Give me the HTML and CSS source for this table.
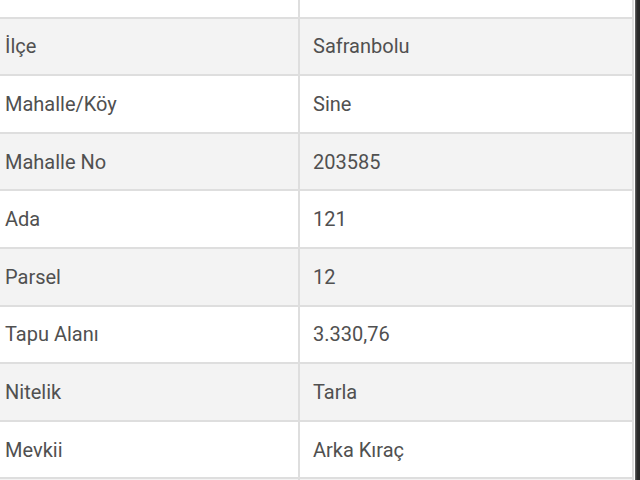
FILE: index.html
```html
<!DOCTYPE html>
<html lang="tr">
<head>
<meta charset="utf-8">
<link rel="stylesheet" href="styles.css">
</head>
<body>
<div class="page">
  <main class="sheet">
    <table class="info">
      <tbody>
        <tr class="odd"><td>İl</td><td>Karabük</td></tr>
        <tr class="even"><td>İlçe</td><td>Safranbolu</td></tr>
        <tr class="odd"><td>Mahalle/Köy</td><td>Sine</td></tr>
        <tr class="even"><td>Mahalle No</td><td>203585</td></tr>
        <tr class="odd"><td>Ada</td><td>121</td></tr>
        <tr class="even"><td>Parsel</td><td>12</td></tr>
        <tr class="odd"><td>Tapu Alanı</td><td>3.330,76</td></tr>
        <tr class="even"><td>Nitelik</td><td>Tarla</td></tr>
        <tr class="odd"><td>Mevkii</td><td>Arka Kıraç</td></tr>
        <tr class="even"><td>Zemin Tipi</td><td>Ana Taşınmaz</td></tr>
      </tbody>
    </table>
  </main>
  <div class="edge"></div>
</div>
</body>
</html>
```

FILE: styles.css
```css
html, body {
  margin: 0;
  padding: 0;
  width: 640px;
  height: 480px;
  overflow: hidden;
  background: #fff;
}

.page {
  display: flex;
  width: 640px;
  height: 480px;
  overflow: hidden;
}

.sheet {
  width: 635px;
  flex: none;
  overflow: hidden;
  background: #fff;
}

.edge {
  flex: 1;
  background: linear-gradient(to right, #6a6a6a, #2c2c2c 40%, #262626);
}

.info {
  border-collapse: collapse;
  margin-left: -10px;
  margin-top: -41px;
  width: 644px;
  font-family: Roboto, "Liberation Sans", sans-serif;
  font-size: 20px;
  color: #505050;
  border-right: 2px solid #dcdcdc;
}

.info td {
  height: 55.6px;
  padding: 0 0 0 13px;
  border: 2px solid #dedede;
  vertical-align: middle;
  line-height: 24px;
}

.info td:first-child {
  width: 293px;
}

.info .even {
  background: #f3f3f3;
}

.info .odd {
  background: #fff;
}
```
